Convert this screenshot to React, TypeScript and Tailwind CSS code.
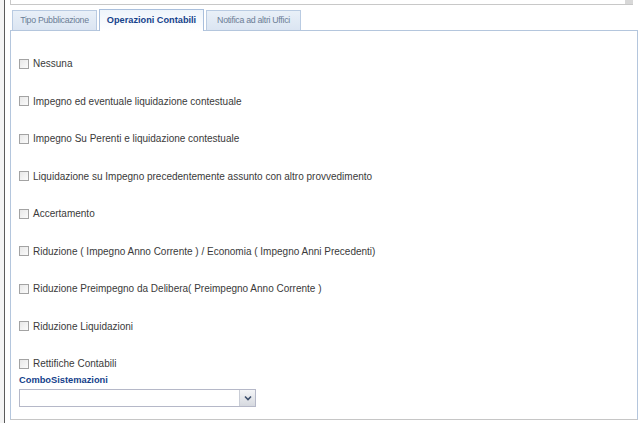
import React from 'react';

const options = [
    'Nessuna',
    'Impegno ed eventuale liquidazione contestuale',
    'Impegno Su Perenti e liquidazione contestuale',
    'Liquidazione su Impegno precedentemente assunto con altro provvedimento',
    'Accertamento',
    'Riduzione ( Impegno Anno Corrente ) / Economia ( Impegno Anni Precedenti)',
    'Riduzione Preimpegno da Delibera( Preimpegno Anno Corrente )',
    'Riduzione Liquidazioni',
    'Rettifiche Contabili',
];

const tabs = ['Tipo Pubblicazione', 'Operazioni Contabili', 'Notifica ad altri Uffici'];

export default function App() {
    const active = 1;
    return (
        <div className="w-[642px] h-[423px] bg-white overflow-hidden flex" style={{ fontFamily: '"Liberation Sans", Arial, sans-serif' }}>
            {/* window frame edge */}
            <div className="w-[4px] shrink-0 bg-[#f4f4f4]" />
            <div className="w-[1px] shrink-0 bg-[#5a5a5a]" />
            <div className="flex-1 flex flex-col pl-[5px] pr-[4px]">
                {/* bottom of previous block */}
                <div className="h-[5px] mr-[5px] border-x border-b border-[#c8c8c8] relative">
                    <div className="absolute right-[-1px] top-0 w-[8px] h-[4px] bg-[#d8d8d8]" />
                </div>

                {/* tab strip */}
                <div className="flex items-end h-[26px] border-b border-[#b4c6dd] pl-[2px] gap-[2px]">
                    {tabs.map((t, i) => (
                        <div key={t}
                            className={i === active
                                ? 'h-[22px] w-[105px] flex items-center justify-center border border-b-0 border-[#a9bfdc] bg-gradient-to-b from-[#eef4fb] to-white text-[9.2px] font-bold text-[#15428b] -mb-px'
                                : 'h-[20px] flex items-center justify-center border border-b-0 border-[#b9cbe2] bg-gradient-to-b from-[#e9f0f8] to-[#dbe5f2] text-[8.8px] tracking-[-0.3px] text-[#6b7d95]'}
                            style={i === active ? undefined : { width: i === 0 ? 85 : 95 }}>
                            {t}
                        </div>
                    ))}
                </div>

                {/* panel */}
                <div className="h-[389px] border-x border-b border-[#b4c6dd] border-b-[#c6c6c6] flex flex-col pl-[8px] pt-[26px]">
                    <div className="flex flex-col gap-[24.5px]">
                        {options.map(o => (
                            <label key={o} className="h-[13px] flex items-center gap-[4px] text-[10px] text-[#3a3a3a]">
                                <span className="w-[10px] h-[10px] border border-[#a3a3a3] bg-gradient-to-br from-[#e8e8e8] to-[#fbfbfb] shrink-0" />
                                <span>{o}</span>
                            </label>
                        ))}
                    </div>
                    <div className="mt-[4px] h-[13px] flex items-center text-[9.3px] font-bold text-[#15428b]">ComboSistemazioni</div>
                    <div className="mt-[2px] w-[237px] h-[18px] flex border border-[#b5b8c8] bg-white">
                        <div className="flex-1" />
                        <div className="w-[16px] border-l border-[#c9cdd6] bg-gradient-to-b from-[#f4f5f7] to-[#d6d9df] flex items-center justify-center">
                            <svg width="8" height="6" viewBox="0 0 8 6">
                                <path d="M1 1.5 L4 4.5 L7 1.5" fill="none" stroke="#3d4f6c" strokeWidth="1.6" />
                            </svg>
                        </div>
                    </div>
                </div>
            </div>
        </div>
    );
}
